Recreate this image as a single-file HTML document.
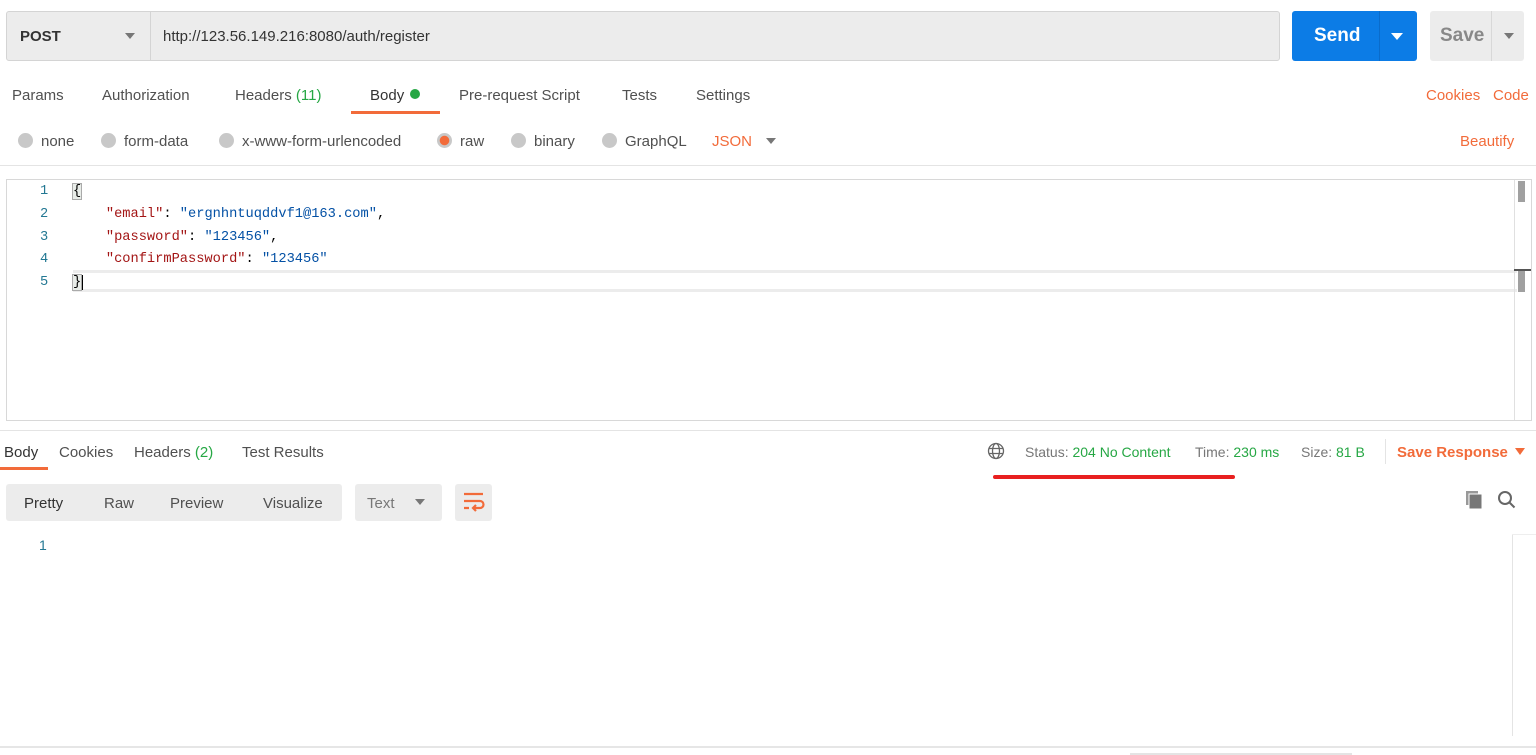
<!DOCTYPE html>
<html><head><style>
*{margin:0;padding:0;box-sizing:border-box}
body{width:1536px;height:755px;background:#fff;position:relative;overflow:hidden;font-family:"Liberation Sans",sans-serif;color:#505050;font-size:15px}
.a{position:absolute;white-space:nowrap}
.mono{font-family:"Liberation Mono",monospace;font-size:13.7px}
.g{color:#26a744}.o{color:#f26b3a}
.rad{display:inline-block;width:15px;height:15px;border-radius:50%;background:#c8c8c8;vertical-align:-2px;margin-right:8px}
.k{color:#a31515}.s{color:#0451a5}
</style></head><body>
<div class="a" style="left:6px;top:11px;width:1274px;height:50px;background:#ececec;border:1px solid #d4d4d4;border-radius:3px"></div>
<div class="a" style="left:150px;top:11px;width:1px;height:50px;background:#d4d4d4"></div>
<div class="a" style="left:20px;top:28px;font-weight:bold;color:#333;font-size:15px">POST</div>
<div class="a" style="left:125px;top:33px;border-left:5px solid transparent;border-right:5px solid transparent;border-top:6px solid #777"></div>
<div class="a" style="left:163px;top:28px;color:#333;font-size:15px">http://123.56.149.216:8080/auth/register</div>
<div class="a" style="left:1292px;top:11px;width:125px;height:50px;background:#0c7ce6;border-radius:3px"></div>
<div class="a" style="left:1379px;top:11px;width:1px;height:50px;background:#0a6ccc"></div>
<div class="a" style="left:1314px;top:25px;color:#fff;font-weight:bold;font-size:19px">Send</div>
<div class="a" style="left:1391px;top:33px;border-left:6px solid transparent;border-right:6px solid transparent;border-top:7px solid #fff"></div>
<div class="a" style="left:1430px;top:11px;width:94px;height:50px;background:#ececec;border-radius:3px"></div>
<div class="a" style="left:1491px;top:11px;width:1px;height:50px;background:#d8d8d8"></div>
<div class="a" style="left:1440px;top:25px;color:#888;font-weight:bold;font-size:19px">Save</div>
<div class="a" style="left:1504px;top:33px;border-left:5px solid transparent;border-right:5px solid transparent;border-top:6px solid #777"></div>
<div class="a" style="left:12px;top:87px">Params</div>
<div class="a" style="left:102px;top:87px">Authorization</div>
<div class="a" style="left:235px;top:87px">Headers <span class="g">(11)</span></div>
<div class="a" style="left:370px;top:87px;color:#333">Body <span style="display:inline-block;width:10px;height:10px;border-radius:50%;background:#26a744;vertical-align:1px;margin-left:2px"></span></div>
<div class="a" style="left:351px;top:111px;width:89px;height:3px;background:#f26b3a"></div>
<div class="a" style="left:459px;top:87px">Pre-request Script</div>
<div class="a" style="left:622px;top:87px">Tests</div>
<div class="a" style="left:696px;top:87px">Settings</div>
<div class="a o" style="left:1426px;top:87px">Cookies</div>
<div class="a o" style="left:1493px;top:87px">Code</div>
<div class="a" style="left:18px;top:133px"><span class="rad"></span>none</div>
<div class="a" style="left:101px;top:133px"><span class="rad"></span>form-data</div>
<div class="a" style="left:219px;top:133px"><span class="rad"></span>x-www-form-urlencoded</div>
<div class="a" style="left:437px;top:133px"><span class="rad" style="background:radial-gradient(circle,#f26b3a 0 4.5px,#c8c8c8 5px)"></span>raw</div>
<div class="a" style="left:511px;top:133px"><span class="rad"></span>binary</div>
<div class="a" style="left:602px;top:133px"><span class="rad"></span>GraphQL</div>
<div class="a o" style="left:712px;top:133px">JSON</div>
<div class="a" style="left:766px;top:138px;border-left:5px solid transparent;border-right:5px solid transparent;border-top:6px solid #777"></div>
<div class="a o" style="left:1460px;top:133px">Beautify</div>
<div class="a" style="left:0;top:165px;width:1536px;height:1px;background:#e4e4e4"></div>
<div class="a" style="left:6px;top:179px;width:1526px;height:242px;border:1px solid #d8d8d8"></div>
<div class="a" style="left:73px;top:270px;width:1444px;height:22px;border-top:3px solid #ececec;border-bottom:3px solid #ececec"></div>
<div class="a" style="left:1514px;top:180px;width:1px;height:240px;background:#e0e0e0"></div>
<div class="a" style="left:1518px;top:181px;width:7px;height:21px;background:#a0a0a0"></div>
<div class="a" style="left:1514px;top:269px;width:17px;height:2px;background:#555"></div>
<div class="a" style="left:1518px;top:271px;width:7px;height:21px;background:#a0a0a0"></div>
<div class="a mono" style="left:40px;top:181px;line-height:22.75px;color:#237893">1<br>2<br>3<br>4<br>5</div>
<div class="a mono" style="left:73px;top:181px;line-height:22.75px;color:#000"><span style="background:#e8ece8;outline:1px solid #aaa">{</span><br>&nbsp;&nbsp;&nbsp;&nbsp;<span class="k">"email"</span>: <span class="s">"ergnhntuqddvf1@163.com"</span>,<br>&nbsp;&nbsp;&nbsp;&nbsp;<span class="k">"password"</span>: <span class="s">"123456"</span>,<br>&nbsp;&nbsp;&nbsp;&nbsp;<span class="k">"confirmPassword"</span>: <span class="s">"123456"</span><br><span style="background:#e8ece8;outline:1px solid #aaa">}</span><span style="border-left:2px solid #000"></span></div>
<div class="a" style="left:0;top:430px;width:1536px;height:1px;background:#e4e4e4"></div>
<div class="a" style="left:4px;top:444px;color:#333">Body</div>
<div class="a" style="left:0;top:467px;width:48px;height:3px;background:#f26b3a"></div>
<div class="a" style="left:59px;top:444px">Cookies</div>
<div class="a" style="left:134px;top:444px">Headers <span class="g">(2)</span></div>
<div class="a" style="left:242px;top:444px">Test Results</div>
<svg class="a" style="left:987px;top:442px" width="18" height="18" viewBox="0 0 18 18" fill="none" stroke="#666" stroke-width="1.3"><circle cx="9" cy="9" r="7.5"/><ellipse cx="9" cy="9" rx="3.5" ry="7.5"/><path d="M1.5 6.5h15M1.5 11.5h15"/></svg>
<div class="a" style="left:1025px;top:444px;font-size:14px;color:#777">Status: <span class="g">204 No Content</span></div>
<div class="a" style="left:1195px;top:444px;font-size:14px;color:#777">Time: <span class="g">230 ms</span></div>
<div class="a" style="left:1301px;top:444px;font-size:14px;color:#777">Size: <span class="g">81 B</span></div>
<div class="a" style="left:1385px;top:439px;width:1px;height:25px;background:#e4e4e4"></div>
<div class="a o" style="left:1397px;top:444px;font-weight:bold">Save Response</div>
<div class="a" style="left:1515px;top:448px;border-left:5px solid transparent;border-right:5px solid transparent;border-top:7px solid #f26b3a"></div>
<div class="a" style="left:993px;top:475px;width:242px;height:4px;background:#e8201f;border-radius:2px"></div>
<div class="a" style="left:6px;top:484px;width:336px;height:37px;background:#ececec;border-radius:3px"></div>
<div class="a" style="left:24px;top:495px;color:#333">Pretty</div>
<div class="a" style="left:104px;top:495px">Raw</div>
<div class="a" style="left:170px;top:495px">Preview</div>
<div class="a" style="left:263px;top:495px">Visualize</div>
<div class="a" style="left:355px;top:484px;width:87px;height:37px;background:#ececec;border-radius:3px"></div>
<div class="a" style="left:367px;top:495px;color:#777">Text</div>
<div class="a" style="left:415px;top:499px;border-left:5px solid transparent;border-right:5px solid transparent;border-top:6px solid #777"></div>
<div class="a" style="left:455px;top:484px;width:37px;height:37px;background:#ececec;border-radius:3px"></div>
<svg class="a" style="left:462px;top:491px" width="24" height="22" viewBox="0 0 24 22" fill="none" stroke="#f26b3a" stroke-width="2.2"><path d="M2 3h19M2 10h16a3.5 3.5 0 0 1 0 7h-6M2 17h5"/><path d="M14 14l-3 3 3 3"/></svg>
<svg class="a" style="left:1465px;top:490px" width="20" height="20" viewBox="0 0 20 20"><rect x="1" y="1" width="12" height="14" fill="#999"/><rect x="4" y="4" width="13" height="15" fill="#777" stroke="#fff" stroke-width="1"/></svg>
<svg class="a" style="left:1497px;top:490px" width="20" height="20" viewBox="0 0 20 20" fill="none" stroke="#666" stroke-width="2"><circle cx="8" cy="8" r="6"/><path d="M12.5 12.5l5 5"/></svg>
<div class="a" style="left:39px;top:537px;font-size:14px;color:#237893">1</div>
<div class="a" style="left:1512px;top:534px;width:1px;height:202px;background:#e4e4e4"></div>
<div class="a" style="left:1512px;top:534px;width:24px;height:1px;background:#eee"></div>
<div class="a" style="left:0;top:746px;width:1536px;height:2px;background:#e6e6e6"></div>
<div class="a" style="left:1130px;top:753px;width:222px;height:2px;background:#e4e4e4"></div>
</body></html>
